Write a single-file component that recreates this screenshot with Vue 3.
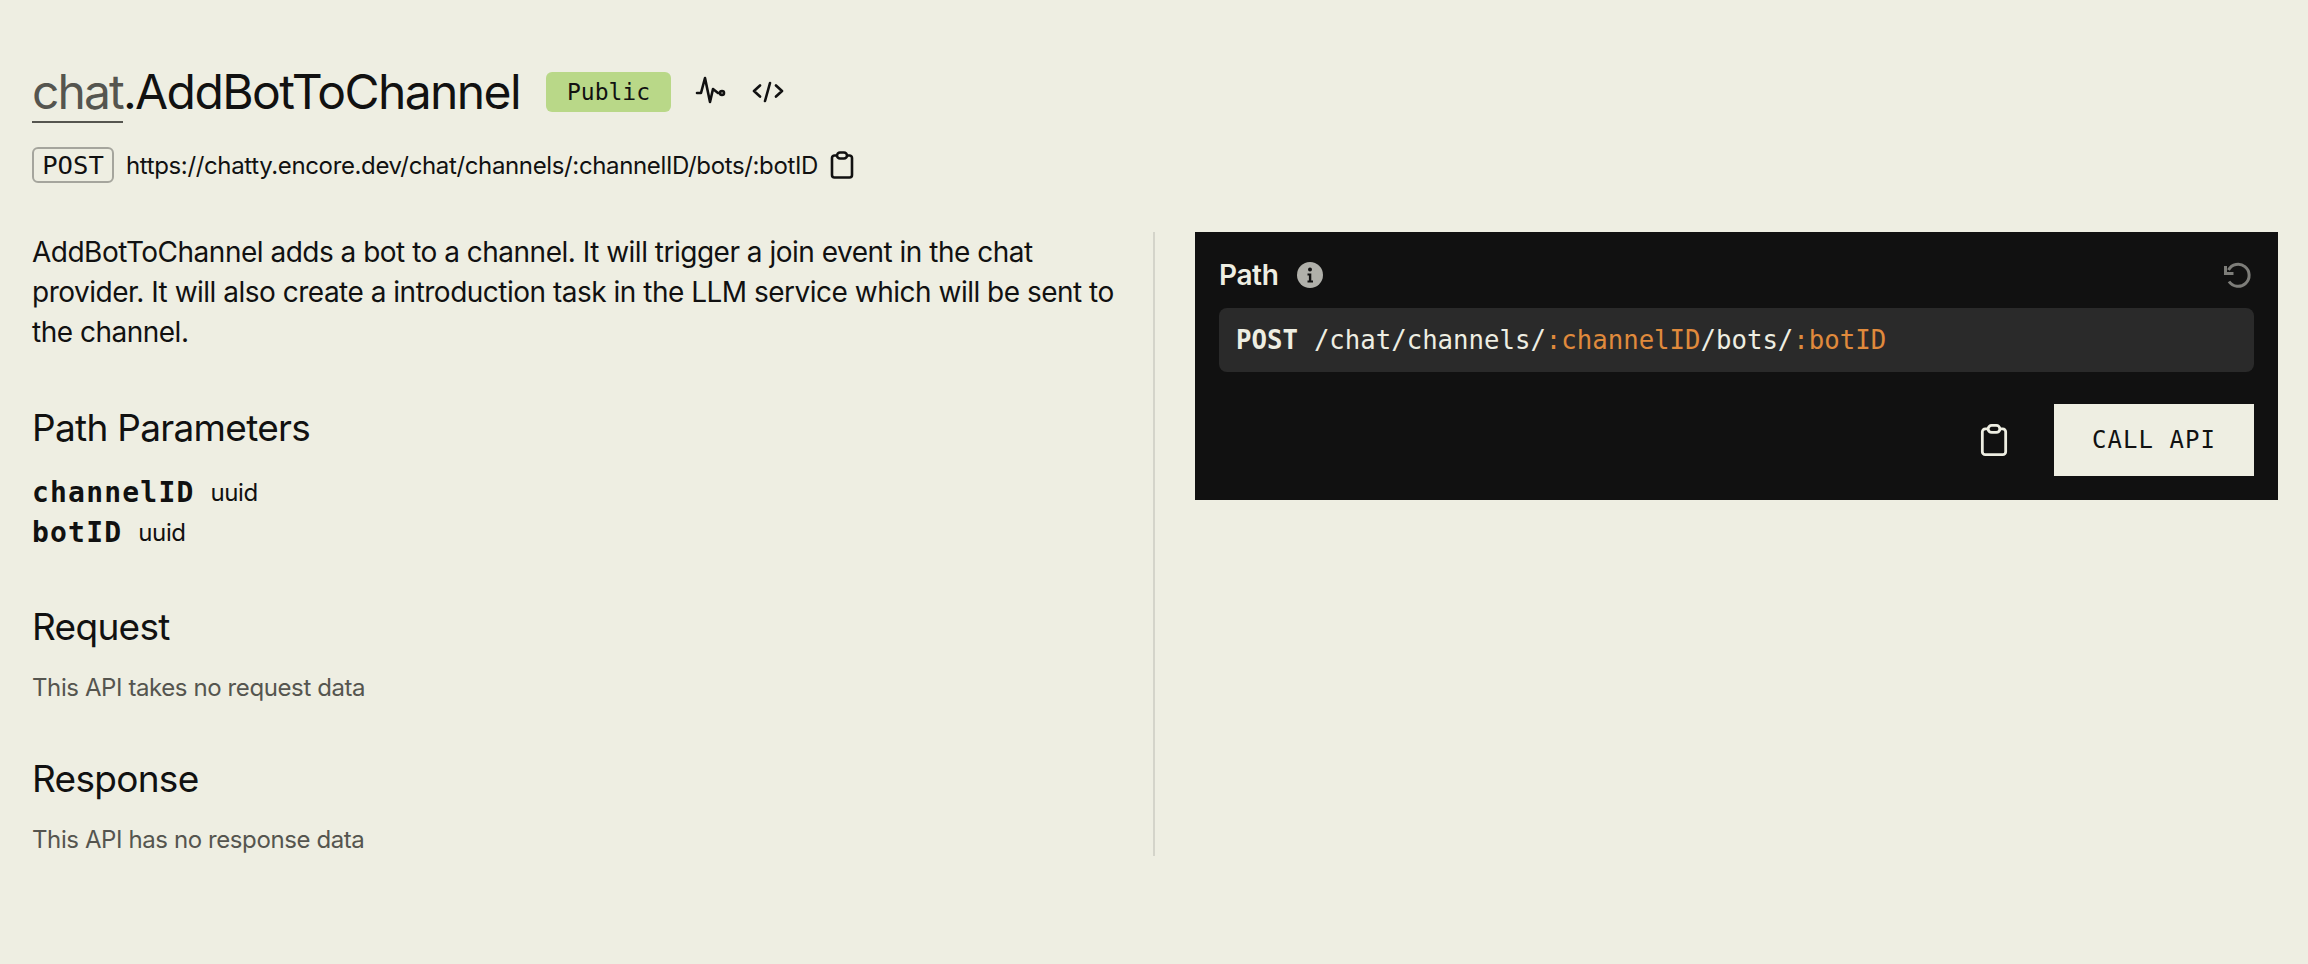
<script setup>
const pathParams = [
  { name: 'channelID', type: 'uuid' },
  { name: 'botID', type: 'uuid' }
]
</script>

<template>
  <div class="page">
    <!-- header -->
    <header class="head">
      <div class="title-row">
        <h1 class="title"><span class="svc">chat</span>.AddBotToChannel</h1>
        <span class="badge">Public</span>
        <svg class="icon pulse" width="32" height="32" viewBox="0 0 32 32" fill="none" stroke="currentColor" stroke-width="2.6" stroke-linecap="round" stroke-linejoin="round">
          <path d="M2 17h4l4-15 5 24 3-13 5 4h2" />
          <circle cx="27" cy="17" r="2" />
        </svg>
        <svg class="icon code" width="32" height="32" viewBox="0 0 32 32" fill="none" stroke="currentColor" stroke-width="2.6" stroke-linecap="round" stroke-linejoin="round">
          <path d="M8 9.500L2 15l6 5.500M24 9.500l6 5.500-6 5.500M18 7l-5 18" />
        </svg>
      </div>
      <div class="url-row">
        <span class="method">POST</span>
        <span class="url">https://chatty.encore.dev/chat/channels/:channelID/bots/:botID</span>
        <svg class="clip" width="24" height="30" viewBox="0 0 24 28" fill="none" stroke="currentColor" stroke-width="2.600" stroke-linejoin="round">
          <path d="M7 4.500H4.500a2.500 2.500 0 0 0-2.500 2.500v17a2.500 2.500 0 0 0 2.500 2.500h15a2.500 2.500 0 0 0 2.500-2.500V7a2.500 2.500 0 0 0-2.500-2.500H17" />
          <rect x="7" y="1.500" width="10" height="6" rx="3" />
        </svg>
      </div>
    </header>

    <div class="columns">
      <!-- docs -->
      <section class="docs">
        <p class="desc">AddBotToChannel adds a bot to a channel. It will trigger a join event in the chat provider. It will also create a introduction task in the LLM service which will be sent to the channel.</p>

        <h2 class="first">Path Parameters</h2>
        <div class="params">
          <div v-for="p in pathParams" :key="p.name" class="param">
            <span class="pname">{{ p.name }}</span>
            <span class="ptype">{{ p.type }}</span>
          </div>
        </div>

        <h2>Request</h2>
        <p class="note">This API takes no request data</p>

        <h2>Response</h2>
        <p class="note">This API has no response data</p>
      </section>

      <!-- api explorer -->
      <section class="panel">
        <div class="panel-head">
          <div class="panel-title">
            <span>Path</span>
            <svg width="26" height="26" viewBox="0 0 26 26">
              <circle cx="13" cy="13" r="13" fill="#b0b0aa" />
              <circle cx="13" cy="7.500" r="2" fill="#111" />
              <path d="M10.500 11.500h3.800v7h1.700v2h-5.500v-2h1.400v-5h-1.400z" fill="#111" />
            </svg>
          </div>
          <svg class="reset" width="28" height="28" viewBox="0 0 28 28" fill="none" stroke="#7d7d79" stroke-width="3">
            <path d="M5.500 9A11 11 0 1 1 6 20.500" />
            <path d="M2.500 5v7.500h8" stroke-linejoin="miter" />
          </svg>
        </div>
        <div class="path-box">
          <b>POST</b>
          <span class="path-text">/chat/channels/<i>:channelID</i>/bots/<i>:botID</i></span>
        </div>
        <div class="actions">
          <svg class="clip-light" width="28" height="34" viewBox="0 0 24 28" fill="none" stroke="currentColor" stroke-width="2.400" stroke-linejoin="round">
            <path d="M7 4.500H4.500a2.500 2.500 0 0 0-2.500 2.500v17a2.500 2.500 0 0 0 2.500 2.500h15a2.500 2.500 0 0 0 2.500-2.500V7a2.500 2.500 0 0 0-2.500-2.500H17" />
            <rect x="7" y="1.500" width="10" height="6" rx="3" />
          </svg>
          <button class="call">CALL API</button>
        </div>
      </section>
    </div>
  </div>
</template>

<style>
body {
  background: #eeeee2;
}
</style>

<style scoped>
.page {
  height: 964px;
  box-sizing: border-box;
  padding: 62px 30px 0 32px;
  background: #eeeee2;
  color: #111111;
  font-family: Inter, "Liberation Sans", sans-serif;
}

.title-row {
  display: flex;
  align-items: center;
  height: 60px;
}

.title {
  margin: 0;
  font-size: 48px;
  font-weight: 400;
  line-height: 60px;
  letter-spacing: -1.6px;
}

.svc {
  display: inline-block;
  color: #55554f;
  line-height: 58px;
  border-bottom: 2px solid #55554f;
  letter-spacing: -1.9px;
}

.badge {
  margin-left: 26px;
  width: 125px;
  height: 40px;
  background: #b9d888;
  border-radius: 6px;
  font-family: "DejaVu Sans Mono", monospace;
  font-size: 23px;
  line-height: 40px;
  text-align: center;
}

.icon {
  flex: none;
}

.pulse {
  margin-left: 24px;
}

.code {
  margin-left: 25px;
}

.url-row {
  display: flex;
  align-items: center;
  margin-top: 25px;
  height: 36px;
}

.method {
  box-sizing: border-box;
  width: 82px;
  height: 36px;
  border: 2px solid #a5a59d;
  border-radius: 6px;
  font-family: "DejaVu Sans Mono", monospace;
  font-size: 25.600px;
  line-height: 32px;
  text-align: center;
}

.url {
  margin-left: 12px;
  font-size: 24px;
  letter-spacing: -0.36px;
}

.clip {
  margin-left: 12px;
}

.columns {
  display: flex;
  margin-top: 49px;
}

.docs {
  box-sizing: border-box;
  flex: none;
  width: 1123px;
  height: 624px;
  padding-right: 30px;
  border-right: 2px solid #d4d4ca;
}

.desc {
  margin: 0;
  font-size: 28px;
  line-height: 40px;
  letter-spacing: -0.5px;
}

h2 {
  margin: 0;
  margin-top: 51px;
  font-size: 37px;
  font-weight: 400;
  line-height: 44px;
  letter-spacing: -0.7px;
}

h2.first {
  margin-top: 54px;
}

.params {
  margin-top: 22px;
  margin-bottom: 53px;
}

.param {
  display: flex;
  align-items: center;
  gap: 16px;
  height: 40px;
}

.pname {
  font-family: "DejaVu Sans Mono", monospace;
  font-size: 28px;
  font-weight: 700;
  letter-spacing: 1.2px;
}

.ptype {
  font-size: 24px;
  letter-spacing: -0.4px;
}

.note {
  margin: 21px 0 0;
  color: #55554f;
  font-size: 24px;
  line-height: 36px;
  letter-spacing: -0.4px;
}

.panel {
  box-sizing: border-box;
  flex: none;
  margin-left: 40px;
  width: 1083px;
  height: 268px;
  padding: 24px;
  background: #111111;
  color: #eeeee2;
}

.panel-head {
  display: flex;
  align-items: center;
  justify-content: space-between;
  height: 36px;
  margin-top: 1px;
}

.panel-title {
  display: flex;
  align-items: center;
  gap: 19px;
  font-size: 28px;
  font-weight: 600;
  letter-spacing: -0.4px;
}

.reset {
  margin-right: 3px;
}

.path-box {
  display: flex;
  align-items: center;
  gap: 16px;
  height: 64px;
  margin-top: 15px;
  padding: 0 17px;
  background: #2a2a2a;
  border-radius: 8px;
  font-family: "DejaVu Sans Mono", monospace;
  font-size: 25.700px;
}

.path-box i {
  font-style: normal;
  color: #e08a3c;
}

.actions {
  display: flex;
  align-items: center;
  justify-content: flex-end;
  margin-top: 32px;
}

.clip-light {
  margin-right: 46px;
}

.call {
  width: 200px;
  height: 72px;
  border: none;
  background: #eeeee2;
  color: #111111;
  font-family: "DejaVu Sans Mono", monospace;
  font-size: 24px;
  letter-spacing: 1.050px;
}
</style>
